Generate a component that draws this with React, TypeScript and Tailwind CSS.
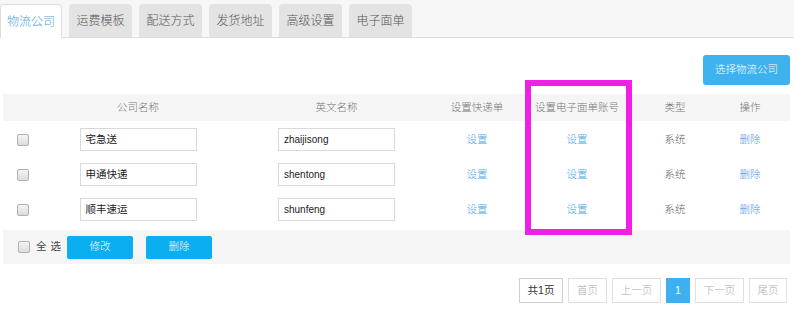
import React from "react"

const font = { fontFamily: '"Liberation Sans", "Noto Sans CJK SC", sans-serif' }

const tabs = ["物流公司", "运费模板", "配送方式", "发货地址", "高级设置", "电子面单"]

const rows = [
  { cn: "宅急送", en: "zhaijisong" },
  { cn: "申通快递", en: "shentong" },
  { cn: "顺丰速运", en: "shunfeng" },
]

const cols = "grid grid-cols-[40px_190px_207px_74px_126px_70px_80px] items-center"

function Check() {
  return (
    <span className="inline-block w-[12px] h-[12px] rounded-[2px] border border-[#b0b0b0] bg-gradient-to-b from-[#f4f4f4] to-[#dcdcdc]" />
  )
}

function PageBtn({ label, w, active, dark }: { label: string; w: string; active?: boolean; dark?: boolean }) {
  return (
    <span
      className={`${w} h-[25px] flex items-center justify-center text-[10.5px] border ${
        active
          ? "bg-[#3cb0f0] border-[#3cb0f0] text-white"
          : dark
          ? "bg-white border-[#cfcfcf] text-[#333] font-normal"
          : "bg-white border-[#e0e0e0] text-[#aaa]"
      }`}
    >
      {label}
    </span>
  )
}

export default function App() {
  return (
    <div className="relative w-[794px] h-[322px] bg-white overflow-hidden font-light" style={font}>
      {/* Tabs */}
      <div className="h-[38px] bg-[#f7f7f7] border-b border-[#dddddd] flex items-end gap-[7px]">
        {tabs.map((t, i) =>
          i === 0 ? (
            <div
              key={t}
              className="w-[62px] h-[34px] -mb-px bg-white border border-b-0 border-[#dddddd] rounded-t-[4px] flex items-center justify-center text-[12px] text-[#4aa3e0]"
            >
              {t}
            </div>
          ) : (
            <div
              key={t}
              className="w-[63px] h-[33px] bg-[#e3e3e3] rounded-t-[4px] flex items-center justify-center text-[12px] text-[#555]"
            >
              {t}
            </div>
          )
        )}
      </div>

      {/* Action */}
      <div className="flex justify-end pr-[4px] pt-[17px]">
        <button className="w-[87px] h-[30px] rounded-[3px] bg-[#3db2ef] text-white text-[10.5px]">选择物流公司</button>
      </div>

      {/* Table */}
      <div className="mx-[3px] w-[787px] mt-[9px]">
        <div className={`${cols} h-[27px] bg-[#f5f5f5] text-[10.5px] text-[#777] text-center`}>
          <span />
          <span>公司名称</span>
          <span>英文名称</span>
          <span>设置快递单</span>
          <span>设置电子面单账号</span>
          <span>类型</span>
          <span>操作</span>
        </div>
        {rows.map((r) => (
          <div key={r.en} className={`${cols} h-[35px] pt-[2px] text-[10.5px] text-center`}>
            <span className="flex justify-center">
              <Check />
            </span>
            <span className="flex justify-center">
              <span className="w-[117px] h-[23px] border border-[#d9d9d9] flex items-center pl-[5px] text-[#222] text-left font-normal">
                {r.cn}
              </span>
            </span>
            <span className="flex justify-center">
              <span className="w-[117px] h-[23px] border border-[#d9d9d9] flex items-center pl-[5px] text-[#222] text-left text-[10px] font-normal">
                {r.en}
              </span>
            </span>
            <span className="text-[#4aa8e8]">设置</span>
            <span className="text-[#4aa8e8]">设置</span>
            <span className="text-[#666]">系统</span>
            <span className="text-[#4a90e6]">删除</span>
          </div>
        ))}

        {/* Footer bar */}
        <div className="mt-[4px] h-[34px] bg-[#f5f5f5] flex items-center pl-[15px] text-[10.5px]">
          <Check />
          <span className="ml-[6px] text-[#444] tracking-[4px] font-normal">全选</span>
          <button className="ml-[2px] w-[66px] h-[23px] rounded-[2px] bg-[#0baef0] text-white text-[10.5px]">修改</button>
          <button className="ml-[13px] w-[66px] h-[23px] rounded-[2px] bg-[#0baef0] text-white text-[10.5px]">删除</button>
        </div>
      </div>

      {/* Pagination */}
      <div className="flex justify-end gap-[5px] pr-[7px] mt-[14px]">
        <PageBtn label="共1页" w="w-[44px]" dark />
        <PageBtn label="首页" w="w-[39px]" />
        <PageBtn label="上一页" w="w-[49px]" />
        <PageBtn label="1" w="w-[24px]" active />
        <PageBtn label="下一页" w="w-[49px]" />
        <PageBtn label="尾页" w="w-[38px]" />
      </div>

      {/* Highlight annotation */}
      <div className="absolute left-[525px] top-[80px] w-[107px] h-[155px] border-[6px] border-[#f01ee6]" />
    </div>
  )
}
